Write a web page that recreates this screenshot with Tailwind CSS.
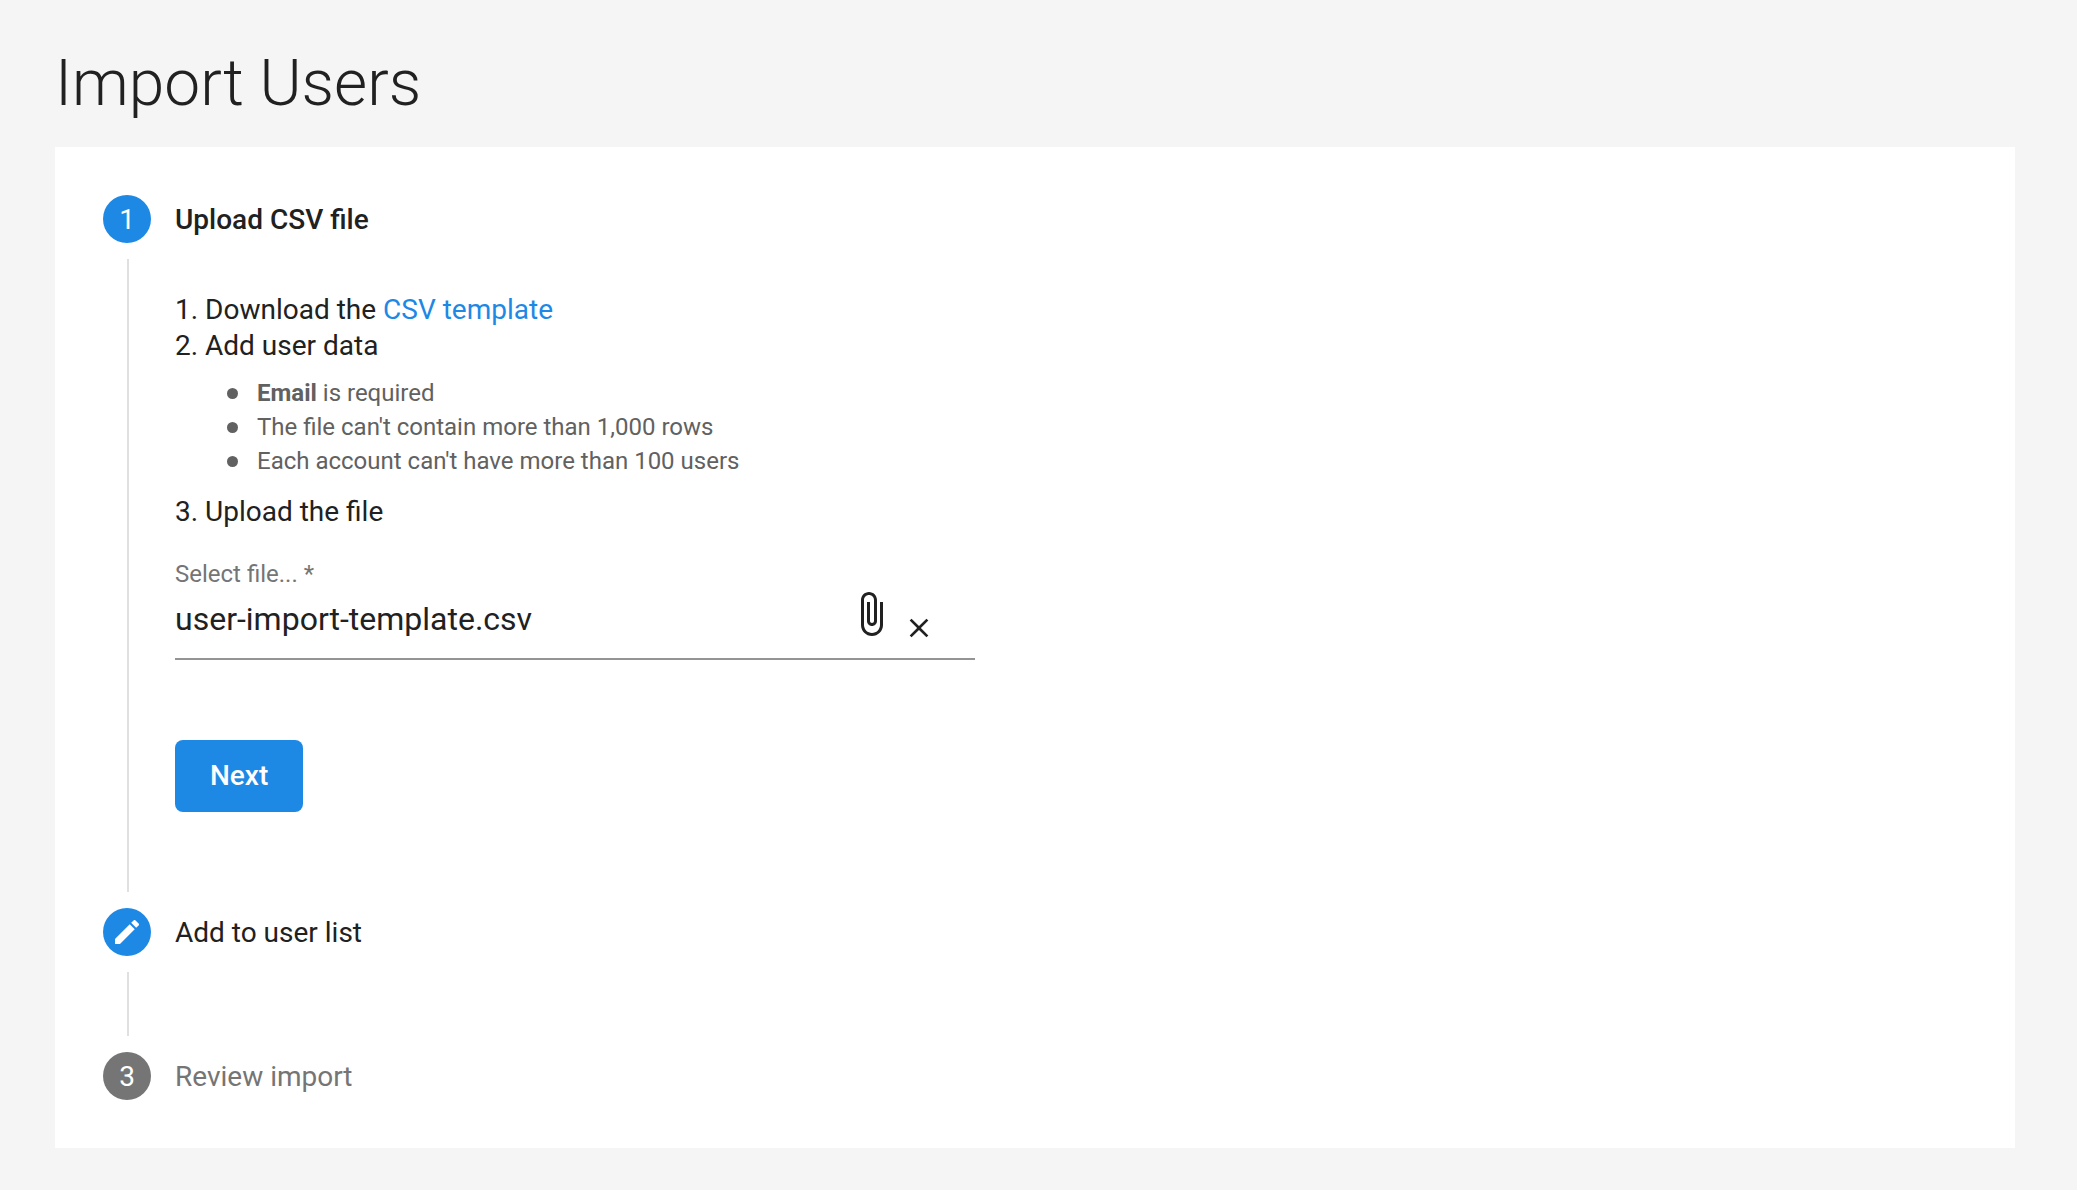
<!DOCTYPE html>
<html lang="en">
<head>
    <meta charset="UTF-8">
    <meta name="viewport" content="width=device-width, initial-scale=1.0">
    <title>Import Users</title>
    <script src="https://cdn.jsdelivr.net/npm/@tailwindcss/browser@4"></script>
</head>
<body class="min-h-screen bg-[#f5f5f5] pt-11 pr-[62px] pb-10 pl-[55px] font-[Roboto,sans-serif] text-[28px] leading-9 text-[#212121]">
    <h1 class="mb-[23px] text-[64px] leading-20 font-light">Import Users</h1>

    <main class="bg-white p-12">
        <ol>
            <!-- Step 1 -->
            <li class="flex gap-6">
                <div class="flex w-12 shrink-0 flex-col">
                    <span class="h-12 rounded-full bg-[#1e88e5] text-center leading-[50px] text-white">1</span>
                    <span class="my-4 ml-6 w-0.5 grow bg-[#e0e0e0]"></span>
                </div>
                <div class="min-w-0 grow pb-24">
                    <h2 class="mb-[49px] h-12 leading-[50px] font-medium">Upload CSV file</h2>
                    <ol>
                        <li>1. Download the <a href="#" class="text-[#1e88e5]">CSV template</a></li>
                        <li>2. Add user data
                            <ul class="mt-3 mb-4 text-2xl leading-[34px] text-[#616161]">
                                <li class="flex items-center gap-[19px] pl-13"><span class="size-[11px] rounded-full bg-[#616161]"></span><span><b>Email</b> is required</span></li>
                                <li class="flex items-center gap-[19px] pl-13"><span class="size-[11px] rounded-full bg-[#616161]"></span>The file can't contain more than 1,000 rows</li>
                                <li class="flex items-center gap-[19px] pl-13"><span class="size-[11px] rounded-full bg-[#616161]"></span>Each account can't have more than 100 users</li>
                            </ul>
                        </li>
                        <li>3. Upload the file</li>
                    </ol>

                    <form>
                        <div class="mt-[30px] max-w-[800px] border-b-2 border-[#949494]">
                            <label for="file-name" class="block text-2xl leading-7 text-[#757575]">Select file... *</label>
                            <div class="flex h-[70px] items-start pr-10">
                                <input id="file-name" type="text" value="user-import-template.csv" readonly class="mt-[11px] h-10 min-w-0 grow text-[32px] leading-10 outline-none">
                                <button type="button" aria-label="Attach file" class="mt-0.5 mr-2">
                                    <svg class="size-12" viewBox="0 0 24 24" fill="currentColor"><path d="M16.5 6v11.5c0 2.21-1.79 4-4 4s-4-1.79-4-4V5c0-1.38 1.12-2.5 2.5-2.5s2.5 1.12 2.5 2.5v10.5c0 .55-.45 1-1 1s-1-.45-1-1V6H10v9.5c0 1.38 1.12 2.5 2.5 2.5s2.5-1.12 2.5-2.5V5c0-2.21-1.79-4-4-4S7 2.79 7 5v12.5c0 3.04 2.46 5.5 5.5 5.5s5.5-2.46 5.5-5.5V6h-1.5z"/></svg>
                                </button>
                                <button type="button" aria-label="Remove file" class="mt-6">
                                    <svg class="size-8" viewBox="0 0 24 24" fill="currentColor"><path d="M19 6.41L17.59 5 12 10.59 6.41 5 5 6.41 10.59 12 5 17.59 6.41 19 12 13.41 17.59 19 19 17.59 13.41 12z"/></svg>
                                </button>
                            </div>
                        </div>
                        <button type="button" class="mt-20 block h-18 rounded-lg bg-[#1e88e5] px-[35px] font-medium text-white">Next</button>
                    </form>
                </div>
            </li>

            <!-- Step 2 -->
            <li class="flex gap-6">
                <div class="flex w-12 shrink-0 flex-col">
                    <span class="flex h-12 items-center justify-center rounded-full bg-[#1e88e5] text-white">
                        <svg class="size-8" viewBox="0 0 24 24" fill="currentColor"><path d="M3 17.25V21h3.75L17.81 9.94l-3.75-3.75L3 17.25zM20.71 7.04c.39-.39.39-1.02 0-1.41l-2.34-2.34c-.39-.39-1.02-.39-1.41 0l-1.83 1.83 3.75 3.75 1.83-1.83z"/></svg>
                    </span>
                    <span class="my-4 ml-6 h-16 w-0.5 bg-[#e0e0e0]"></span>
                </div>
                <h2 class="h-12 leading-[50px]">Add to user list</h2>
            </li>

            <!-- Step 3 -->
            <li class="flex gap-6 text-[#757575]">
                <span class="size-12 shrink-0 rounded-full bg-[#757575] text-center leading-[50px] text-white">3</span>
                <h2 class="h-12 leading-[50px]">Review import</h2>
            </li>
        </ol>
    </main>
</body>
</html>
